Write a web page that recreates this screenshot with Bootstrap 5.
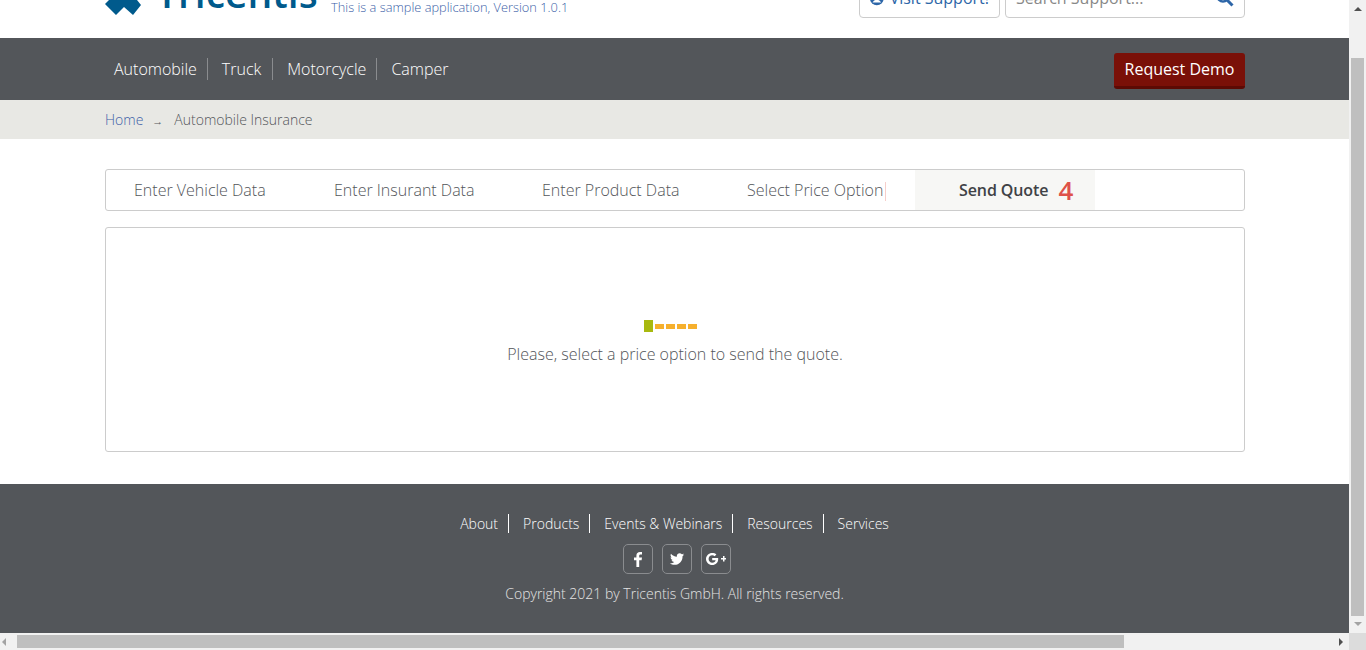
<!DOCTYPE html>
<html lang="en">
<head>
    <meta charset="UTF-8">
    <meta name="viewport" content="width=device-width, initial-scale=1.0">
    <title>Tricentis - Send Quote</title>
    <link href="https://cdn.jsdelivr.net/npm/bootstrap@5.3.0/dist/css/bootstrap.min.css" rel="stylesheet">
    <style>
        html, body { height: 100%; overflow: hidden; }
        body {
            font-family: "Open Sans", "Liberation Sans", sans-serif;
            font-weight: 300;
            font-size: 14px;
            color: #53565a;
            background: #f1f1f1;
        }
        .app-frame { width: 1366px; height: 650px; }
        .page-area { width: 1349px; height: 633px; background: #fff; overflow: hidden; }
        .wrap-1140 { width: 1140px; margin-left: 105px; }

        /* page is scrolled, the header overflows upward and is clipped */
        .top-head { height: 38px; overflow: hidden; }
        .brand-mark { margin-bottom: 23px; }
        .brand-name { font-size: 39px; line-height: 40px; font-weight: 600; color: #005a8c; white-space: nowrap; width: 162px; margin-left: 15px; margin-bottom: 25px; }
        .brand-sub { font-size: 12.8px; line-height: 16px; color: #3d5fa8; margin-left: 13px; margin-bottom: 23px; white-space: nowrap; }
        .head-box { height: 40px; flex-shrink: 0; border: 1px solid #ccc; border-radius: 4px; font-size: 16px; font-weight: 400; margin-bottom: 20px; padding: 0 10px; white-space: nowrap; }
        .support-btn { width: 141px; color: #2d66a8; gap: 6px; }
        .search-box { width: 240px; margin-left: 5px; color: #888; }

        .main-nav { height: 62px; background: #53565a; }
        .nav-item-link { color: #fff; font-size: 16px; line-height: 22px; padding: 0 10px 0 14px; border-right: 1px solid #8a8c8f; text-decoration: none; }
        .nav-item-link:first-child { padding-left: 9px; }
        .nav-item-link:nth-child(2) { padding-right: 11px; }
        .nav-item-link:last-child { border-right: 0; }
        .demo-btn { background: #7a1008; color: #fff; font-size: 16px; font-weight: 400; width: 131px; height: 36px; border: 0; border-bottom: 3px solid #5c0a04; border-radius: 3px; padding: 0 0 2px; margin-top: 15px; }

        .crumb-bar { height: 39px; background: #e8e8e4; font-size: 14px; }
        .crumb-bar a { color: #3d5fa8; text-decoration: none; }
        .crumb-arrow { font-size: 11px; margin: 3px 11px 0 9px; }

        .content-area { padding-top: 30px; height: 345px; }
        .wizard-bar { height: 42px; border: 1px solid #ccc; border-radius: 3px; font-size: 16px; }
        .wizard-step { height: 40px; line-height: 40px; white-space: nowrap; }
        .step-one { width: 208px; padding-left: 28px; }
        .step-two { width: 208px; padding-left: 20px; }
        .step-three { width: 205px; padding-left: 20px; }
        .step-four { width: 188px; padding-left: 20px; }
        .step-cursor { display: inline-block; width: 1px; height: 19px; margin-left: 2px; background: #f6cfcb; vertical-align: middle; }
        .step-active { width: 180px; padding-left: 44px; background: #f7f7f5; font-weight: 600; color: #3f4246; letter-spacing: -0.1px; }
        .step-count { color: #de5148; font-size: 26px; font-weight: 600; margin-left: 6px; line-height: 40px; vertical-align: top; }
        .quote-panel { height: 225px; margin-top: 16px; border: 1px solid #ccc; border-radius: 3px; padding-top: 92px; font-size: 16px; }
        .progress-row { padding-right: 10px; }
        .progress-green { width: 9px; height: 12px; background: #a8b90f; }
        .progress-dot { width: 9px; height: 5px; background: #f6b02d; margin-left: 2px; }
        .quote-note { margin-top: 11px; line-height: 22px; }

        .site-foot { height: 149px; background: #53565a; padding-top: 30px; color: #fff; font-size: 14px; }
        .foot-nav { padding-left: 10px; }
        .foot-link { color: #fff; line-height: 19px; padding: 0 10px 0 14px; border-right: 1px solid #fff; text-decoration: none; }
        .foot-link:last-child { border-right: 0; }
        .foot-link:first-child { padding-left: 0; }
        .social-box { width: 30px; height: 30px; border: 1px solid #8a8c8f; border-radius: 5px; }
        .social-row { gap: 9px; margin-top: 11px; padding-left: 5px; }
        .copy-line { margin-top: 10px; color: #e4e4e4; line-height: 20px; }

        .bar-right { width: 17px; height: 633px; background: #f1f1f1; }
        .bar-bottom { width: 100%; height: 17px; background: #f1f1f1; }
        .bar-spacer { width: 17px; }
        .thumb-v { width: 13px; height: 558px; background: #bfbfbf; margin: 58px auto 0; }
        .thumb-h { width: 1107px; height: 13px; background: #bfbfbf; margin-top: 2px; }
        .tri { width: 0; height: 0; border-style: solid; }
        .tri-up { border-width: 0 4px 4px; border-color: transparent transparent #505050; position: absolute; top: 7px; left: 1354px; }
        .tri-down { border-width: 4px 4px 0; border-color: #a3a3a3 transparent transparent; position: absolute; top: 622px; left: 1354px; }
        .tri-left { border-width: 4px 4px 4px 0; border-color: transparent #a3a3a3 transparent transparent; position: absolute; top: 638px; left: 2px; }
        .tri-right { border-width: 4px 0 4px 4px; border-color: transparent transparent transparent #505050; position: absolute; top: 638px; left: 1339px; }
        .corner-box { width: 17px; height: 17px; background: #dcdcdc; }
    </style>
</head>
<body>
    <div class="app-frame position-relative">
        <div class="d-flex">
            <div class="page-area">
                <header class="top-head d-flex align-items-end">
                    <div class="wrap-1140 d-flex align-items-end justify-content-between">
                        <div class="d-flex align-items-end">
                            <svg class="brand-mark flex-shrink-0" width="36" height="15" viewBox="0 0 36 15"><path d="M0 4 L4 0 L32 0 L36 5 L28 15 L19 7 L11 15Z" fill="#005a8c"/></svg>
                            <div class="brand-name">Tricentis</div>
                            <div class="brand-sub">This is a sample application, Version 1.0.1</div>
                        </div>
                        <div class="d-flex">
                            <div class="head-box support-btn d-flex align-items-center">
                                <svg width="15" height="15" viewBox="0 0 15 15"><circle cx="7.5" cy="7.5" r="7.5" fill="#2d66a8"/><circle cx="7.5" cy="5.5" r="2.5" fill="#fff"/><path d="M2.8 12c.8-2 2.6-3 4.7-3s3.900 1 4.700 3z" fill="#fff"/></svg>
                                <span>Visit Support!</span>
                            </div>
                            <div class="head-box search-box d-flex align-items-center justify-content-between">
                                <span>Search Support...</span>
                                <svg width="18" height="18" viewBox="0 0 18 18"><circle cx="7" cy="7" r="5.5" fill="none" stroke="#2d66a8" stroke-width="2.5"/><path d="M11 11 L16.5 16.5" stroke="#2d66a8" stroke-width="3"/></svg>
                            </div>
                        </div>
                    </div>
                </header>

                <nav class="main-nav">
                    <div class="wrap-1140 h-100 d-flex justify-content-between">
                        <div class="d-flex align-items-center">
                            <a class="nav-item-link" href="#">Automobile</a>
                            <a class="nav-item-link" href="#">Truck</a>
                            <a class="nav-item-link" href="#">Motorcycle</a>
                            <a class="nav-item-link" href="#">Camper</a>
                        </div>
                        <button class="demo-btn align-self-start" type="button">Request Demo</button>
                    </div>
                </nav>

                <div class="crumb-bar">
                    <div class="wrap-1140 h-100 d-flex align-items-center">
                        <a href="#">Home</a><span class="crumb-arrow">&rarr;</span><span>Automobile Insurance</span>
                    </div>
                </div>

                <main class="content-area">
                    <div class="wrap-1140">
                        <div class="wizard-bar d-flex">
                            <div class="wizard-step step-one">Enter Vehicle Data</div>
                            <div class="wizard-step step-two">Enter Insurant Data</div>
                            <div class="wizard-step step-three">Enter Product Data</div>
                            <div class="wizard-step step-four">Select Price Option<span class="step-cursor"></span></div>
                            <div class="wizard-step step-active">Send Quote <span class="step-count">4</span></div>
                        </div>
                        <div class="quote-panel text-center">
                            <div class="progress-row d-flex justify-content-center align-items-center">
                                <div class="progress-green"></div>
                                <div class="progress-dot"></div>
                                <div class="progress-dot"></div>
                                <div class="progress-dot"></div>
                                <div class="progress-dot"></div>
                            </div>
                            <div class="quote-note">Please, select a price option to send the quote.</div>
                        </div>
                    </div>
                </main>

                <footer class="site-foot">
                    <div class="foot-nav d-flex justify-content-center">
                        <a class="foot-link" href="#">About</a>
                        <a class="foot-link" href="#">Products</a>
                        <a class="foot-link" href="#">Events &amp; Webinars</a>
                        <a class="foot-link" href="#">Resources</a>
                        <a class="foot-link" href="#">Services</a>
                    </div>
                    <div class="d-flex justify-content-center social-row">
                        <div class="social-box d-flex align-items-center justify-content-center">
                            <svg width="8" height="15" viewBox="0 0 8 15"><path d="M2.4 15V8.3H0V5.6h2.4V3.7C2.4 1.2 3.8 0 6 0c1 0 1.7.1 2 .1v2.4H6.6c-1.1 0-1.4.6-1.4 1.4v1.7H8l-.4 2.7H5.2V15z" fill="#fff"/></svg>
                        </div>
                        <div class="social-box d-flex align-items-center justify-content-center">
                            <svg width="14" height="12" viewBox="0 0 24 20"><path d="M24 2.4c-.9.4-1.8.7-2.8.8 1-.6 1.8-1.6 2.2-2.7-1 .6-2 1-3.1 1.2C19.3.7 18 0 16.6 0c-2.7 0-4.9 2.2-4.9 4.9 0 .4 0 .8.1 1.1C7.7 5.8 4.1 3.9 1.7.9 1.2 1.6 1 2.5 1 3.4c0 1.7.9 3.2 2.2 4.1-.8 0-1.6-.2-2.2-.6v.1c0 2.4 1.7 4.4 3.9 4.8-.4.1-.8.2-1.3.2-.3 0-.6 0-.9-.1.6 2 2.4 3.4 4.6 3.4-1.7 1.3-3.8 2.1-6.1 2.1-.4 0-.8 0-1.2-.1C2.2 19.2 4.8 20 7.5 20c9.1 0 14-7.5 14-14v-.6c1-.7 1.8-1.6 2.5-3z" fill="#fff"/></svg>
                        </div>
                        <div class="social-box d-flex align-items-center justify-content-center">
                            <svg width="20" height="12" viewBox="0 0 20 12"><path d="M6.2 5v2.3h3.4C9.4 8.7 8.2 9.7 6.2 9.7 4.2 9.7 2.6 8 2.6 6s1.6-3.7 3.6-3.7c1 0 1.8.3 2.4.9l1.8-1.8C9.3.4 7.9 0 6.2 0 2.8 0 0 2.7 0 6s2.8 6 6.2 6c3.6 0 6-2.5 6-6 0-.4 0-.7-.1-1z" fill="#fff"/><path d="M15 5h2V3h1.5v2H20v1.5h-1.5v2H17v-2h-2z" fill="#fff"/></svg>
                        </div>
                    </div>
                    <div class="copy-line text-center">Copyright 2021 by Tricentis GmbH. All rights reserved.</div>
                </footer>
            </div>
            <div class="bar-right"><div class="thumb-v"></div></div>
        </div>
        <div class="bar-bottom d-flex">
            <div class="bar-spacer"></div>
            <div class="thumb-h"></div>
            <div class="flex-grow-1"></div>
            <div class="corner-box"></div>
        </div>
        <div class="tri tri-up"></div>
        <div class="tri tri-down"></div>
        <div class="tri tri-left"></div>
        <div class="tri tri-right"></div>
    </div>
    <script src="https://cdn.jsdelivr.net/npm/bootstrap@5.3.0/dist/js/bootstrap.bundle.min.js"></script>
</body>
</html>
